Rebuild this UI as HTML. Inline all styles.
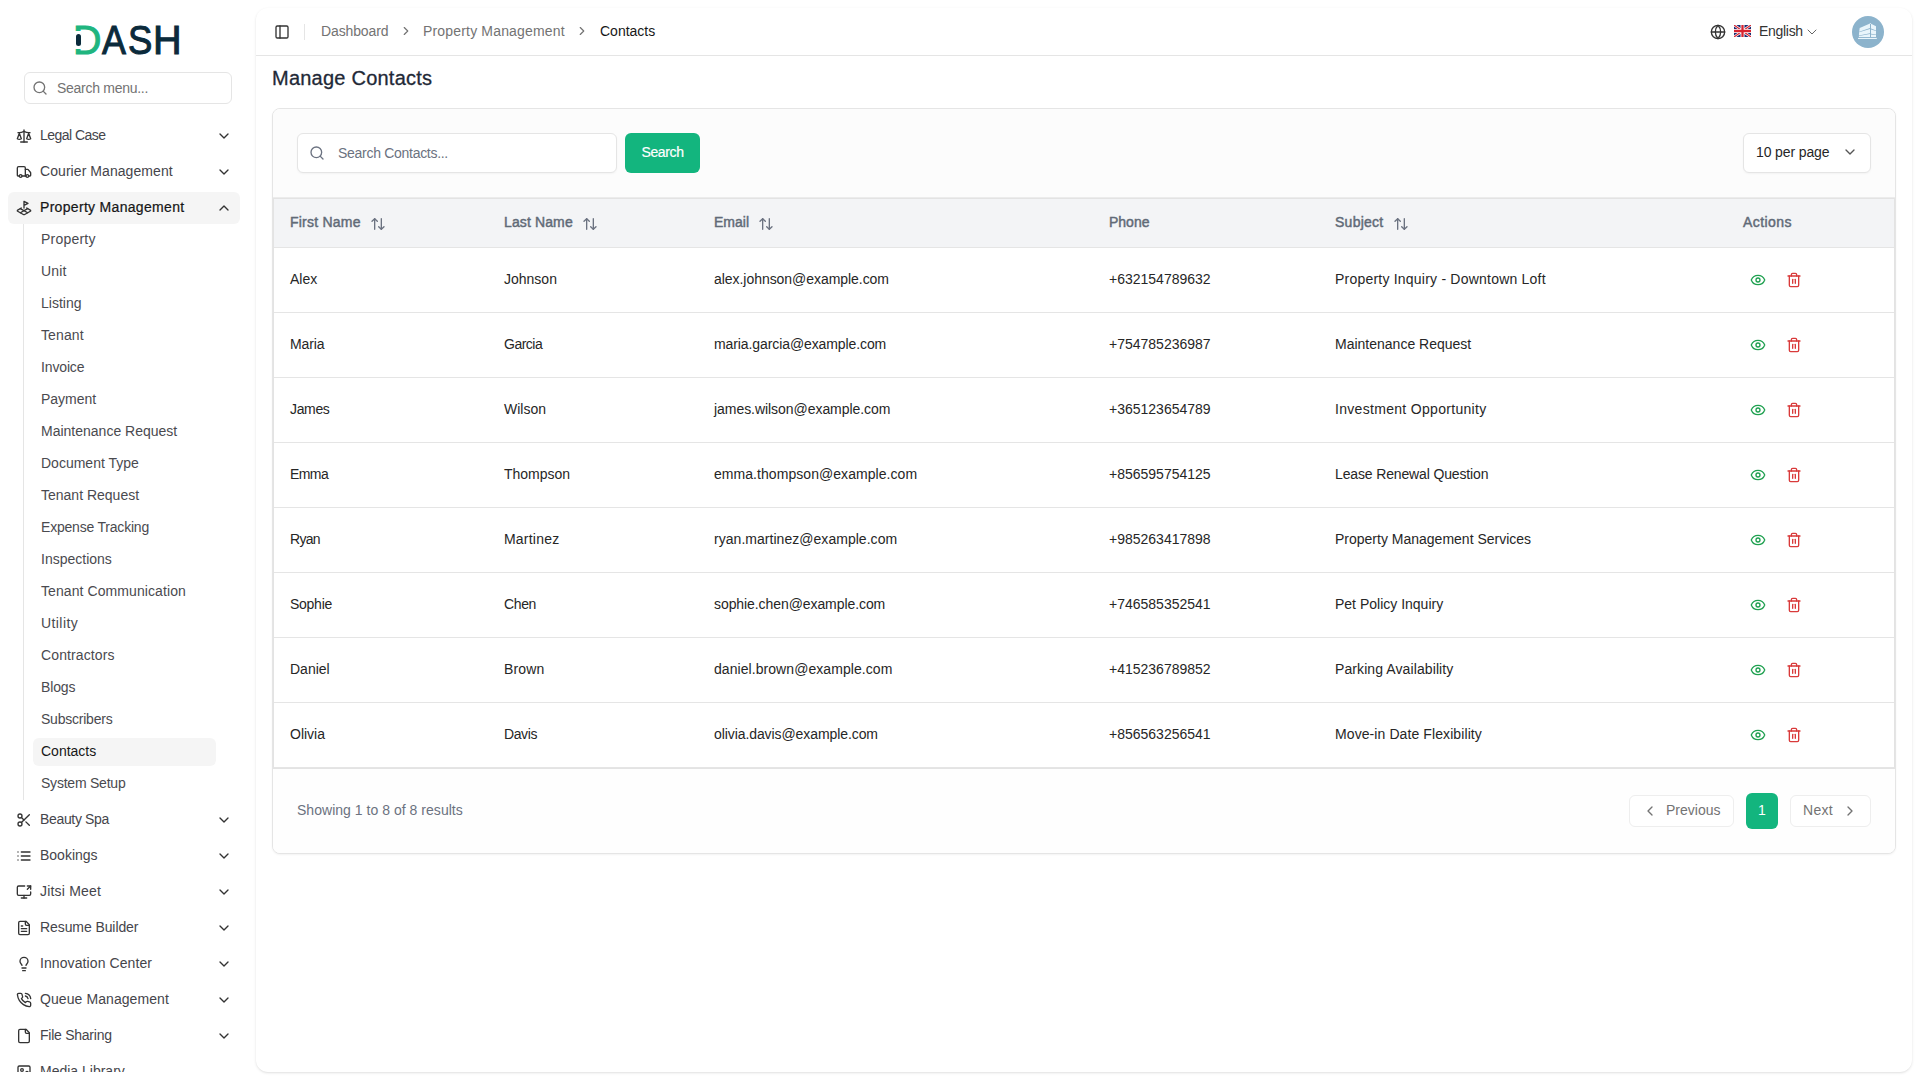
<!DOCTYPE html>
<html lang="en"><head><meta charset="utf-8"><title>Manage Contacts</title>
<style>
*{box-sizing:border-box;margin:0;padding:0}
html,body{width:1920px;height:1080px;overflow:hidden}
body{background:#fff;font-family:"Liberation Sans",sans-serif;font-size:14px;color:#262626;position:relative}
svg.i{display:block;flex:none}
i{display:block;font-style:normal}
.sidebar{position:absolute;left:0;top:0;width:256px;height:1072px;overflow:hidden}
.logo{position:absolute;left:0;top:0;width:256px;height:64px;font-weight:400;font-size:40px;line-height:40px;color:#0b2a3b;white-space:nowrap}
.logo>*{position:absolute;top:20px;transform-origin:0 50%;-webkit-text-stroke:1px #0b2a3b}
.logo .ld{left:73.350px;color:#20b57f;-webkit-text-stroke:1px #20b57f;transform:scaleX(.984)}
.logo .l2{left:102.450px;transform:scaleX(.897)}
.logo .l3{left:128.130px;transform:scaleX(.9125)}
.logo .l4{left:152.700px;transform:scaleX(.99)}
.logo .lmask{left:72px;top:31px;width:9.300px;height:18px;background:#fff}
.logo .lpill{left:76px;top:34px;width:5px;height:12px;border-radius:2.500px;background:#0b2a3b}
.msearch{position:absolute;left:24px;top:72px;width:208px;height:32px;border:1px solid #e5e5e5;border-radius:6px;background:#fff;display:flex;align-items:center;padding-left:7px;color:#737373}
.msearch>span{margin-left:9px}
.mi{position:absolute;left:8px;width:232px;height:32px;border-radius:6px;display:flex;align-items:center;padding:0 8px;color:#45454b}
.mi>svg{color:#333}
.mi .ml{margin-left:8px;white-space:nowrap;position:relative;top:-1px}
.mi .chev{margin-left:auto}
.mi.act{background:#f5f5f5;color:#171717}
.mi.act .ml{-webkit-text-stroke:0.22px #171717}
.subline{position:absolute;left:23px;top:224px;width:1px;height:576px;background:#e5e5e5}
.si{position:absolute;left:33px;width:183px;height:28px;border-radius:6px;display:flex;align-items:center;padding:0 0 2px 8px;color:#404040;white-space:nowrap}
.si.act{background:#f5f5f5;color:#171717}
.inset{position:absolute;left:256px;top:8px;width:1656px;height:1064px;background:#fff;border-radius:12px;box-shadow:0 1px 3px 0 rgba(0,0,0,.1),0 1px 2px -1px rgba(0,0,0,.1)}
.hdr{position:absolute;left:0;top:0;width:100%;height:48px;border-bottom:1px solid #e5e5e5}
.hdr>*{position:absolute}
.tgl{left:18px;top:16px;color:#333}
.vsep{left:48px;top:16px;width:1px;height:16px;background:#e5e5e5}
.bc{left:0;top:0;height:47px;width:600px;color:#737373}
.bc>*{position:absolute;top:14px;line-height:18px;white-space:nowrap}
.bc .b1{left:65px}.bc .b2{left:167px}.bc .b3{left:344px;color:#171717}
.bc .bsep{top:16px}.bc .s1{left:143px}.bc .s2{left:319px}
.lang{left:1453px;top:0;height:47px;width:120px;color:#333}
.lang>*{position:absolute}
.lang .gl{left:1px;top:16px}
.lang .flag{left:25px;top:17px}
.lang .en{left:50px;top:14px;line-height:18px}
.lang .lchev{left:95px;top:16px;color:#666}
.avatar{left:1596px;top:8px}
.title{position:absolute;left:16px;top:58px;font-size:20px;line-height:24px;font-weight:400;-webkit-text-stroke:0.3px #1f2937;color:#1f2937;white-space:nowrap}
.card{position:absolute;left:16px;top:100px;width:1624px;height:746px;border:1px solid #e5e5e5;border-radius:8px;background:#fff;box-shadow:0 1px 2px rgba(0,0,0,.05)}
.card>*{position:absolute}
.sbox{left:24px;top:24px;width:320px;height:40px;background:#fff;border:1px solid #e5e5e5;border-radius:6px;display:flex;align-items:center;padding-left:11px;color:#6b7280;box-shadow:0 1px 2px rgba(0,0,0,.04)}
.sbox>span{margin-left:13px}
.sbtn{left:352px;top:24px;width:75px;height:40px;border-radius:6px;background:#13b57e;color:#fff;text-align:center;line-height:38px;font-weight:400;-webkit-text-stroke:0.2px #fff}
.pp{left:1470px;top:24px;width:128px;height:40px;background:#fff;border:1px solid #e5e5e5;border-radius:6px;display:flex;align-items:center;padding:0 12px 2px;color:#262626;box-shadow:0 1px 2px rgba(0,0,0,.04)}
.pp .ppc{margin-left:auto;color:#555}
.filt{left:0;top:0;width:1622px;height:89px;background:#fcfcfc;border-bottom:1px solid #ececec;border-radius:7px 7px 0 0}
.foot{left:0;top:660px;width:1622px;height:84px;background:#fefefe;border-radius:0 0 7px 7px}
.twrap{left:0;top:89px;width:1622px;height:571px;border:1px solid #e3e3e3}
.tbl{border-collapse:separate;border-spacing:0;table-layout:fixed;width:1620px}
.tbl th{height:49px;background:#f3f4f6;text-align:left;padding:0 0 4px 16px;font-weight:400;-webkit-text-stroke:0.45px #616a77;color:#616a77;border-bottom:1px solid #e5e5e5;white-space:nowrap}
.tbl th .thl{display:inline-block;vertical-align:middle}
.tbl th .sort{display:inline-block;vertical-align:middle;margin-left:9px;color:#6b7280;position:relative;top:2px}
.tbl td{height:65px;padding:0 0 3px 16px;border-bottom:1px solid #e5e5e5;color:#262626;white-space:nowrap}
.tbl td.acts{padding:0 0 1px 23px}
.tbl td.acts svg{display:inline-block;vertical-align:middle}
.eye{color:#1fa050}
.trash{color:#d93a3a;margin-left:20px}
.showing{left:24px;top:692px;line-height:18px;color:#6b7280;white-space:nowrap}
.pg{height:32px;border:1px solid #eeeeee;border-radius:6px;top:686px;background:#fff;display:flex;align-items:center;padding-bottom:2px;color:#737373;white-space:nowrap}
.pg.prev{left:1356px;width:105px;padding-left:12px}
.pg.prev>span{margin-left:8px}
.pg.cur{left:1473px;top:684px;width:32px;height:36px;background:#13b57e;border:none;color:#fff;justify-content:center}
.pg.next{left:1517px;width:81px;padding-left:12px}
.pg.next>span{margin-right:8px}
.pg svg{position:relative;top:1px}
.pg.next svg{left:1px}
.si{color:#4a4a4f}

</style></head>
<body>
<aside class="sidebar">
<div class="logo"><span class="ld">D</span><span class="l2">A</span><span class="l3">S</span><span class="l4">H</span><i class="lmask"></i><i class="lpill"></i></div>
<div class="msearch"><svg class="i " width="16" height="16" viewBox="0 0 24 24" fill="none" stroke="currentColor" stroke-width="2" stroke-linecap="round" stroke-linejoin="round" style="color:#737373"><circle cx="11" cy="11" r="8"/><path d="m21 21-4.300-4.300"/></svg><span><span style="letter-spacing:-0.279px">Search menu...</span></span></div>
<div class="mi" style="top:120px"><svg class="i " width="16" height="16" viewBox="0 0 24 24" fill="none" stroke="currentColor" stroke-width="2" stroke-linecap="round" stroke-linejoin="round" style=""><path d="m16 16 3-8 3 8c-.87.65-1.92 1-3 1s-2.13-.35-3-1Z"/><path d="m2 16 3-8 3 8c-.87.65-1.92 1-3 1s-2.13-.35-3-1Z"/><path d="M7 21h10"/><path d="M12 3v18"/><path d="M3 7h2c2 0 5-1 7-2 2 1 5 2 7 2h2"/></svg><span class="ml"><span style="letter-spacing:-0.53px">Legal Case</span></span><svg class="i chev" width="16" height="16" viewBox="0 0 24 24" fill="none" stroke="currentColor" stroke-width="2" stroke-linecap="round" stroke-linejoin="round" style=""><path d="m6 9 6 6 6-6"/></svg></div>
<div class="mi" style="top:156px"><svg class="i " width="16" height="16" viewBox="0 0 24 24" fill="none" stroke="currentColor" stroke-width="2" stroke-linecap="round" stroke-linejoin="round" style=""><path d="M14 18V6a2 2 0 0 0-2-2H4a2 2 0 0 0-2 2v11a1 1 0 0 0 1 1h2"/><path d="M15 18H9"/><path d="M19 18h2a1 1 0 0 0 1-1v-3.650a1 1 0 0 0-.22-.624l-3.48-4.350A1 1 0 0 0 17.520 8H14"/><circle cx="17" cy="18" r="2"/><circle cx="7" cy="18" r="2"/></svg><span class="ml"><span style="letter-spacing:0.067px">Courier Management</span></span><svg class="i chev" width="16" height="16" viewBox="0 0 24 24" fill="none" stroke="currentColor" stroke-width="2" stroke-linecap="round" stroke-linejoin="round" style=""><path d="m6 9 6 6 6-6"/></svg></div>
<div class="mi act" style="top:192px"><svg class="i " width="16" height="16" viewBox="0 0 24 24" fill="none" stroke="currentColor" stroke-width="2" stroke-linecap="round" stroke-linejoin="round" style=""><path d="m12 8 6-3-6-3v10"/><path d="m8 11.990-5.500 3.140a1 1 0 0 0 0 1.740l8.500 4.860a2 2 0 0 0 2 0l8.500-4.860a1 1 0 0 0 0-1.740L16 12"/><path d="m6.490 12.850 11.020 6.300"/><path d="M17.510 12.850 6.500 19.150"/></svg><span class="ml"><span style="letter-spacing:0.311px">Property Management</span></span><svg class="i chev" width="16" height="16" viewBox="0 0 24 24" fill="none" stroke="currentColor" stroke-width="2" stroke-linecap="round" stroke-linejoin="round" style=""><path d="m18 15-6-6-6 6"/></svg></div>
<div class="subline"></div>
<div class="si" style="top:226px"><span><span style="letter-spacing:0.225px">Property</span></span></div>
<div class="si" style="top:258px"><span><span style="letter-spacing:0.2px">Unit</span></span></div>
<div class="si" style="top:290px"><span>Listing</span></div>
<div class="si" style="top:322px"><span><span style="letter-spacing:0.117px">Tenant</span></span></div>
<div class="si" style="top:354px"><span><span style="letter-spacing:-0.143px">Invoice</span></span></div>
<div class="si" style="top:386px"><span>Payment</span></div>
<div class="si" style="top:418px"><span>Maintenance Request</span></div>
<div class="si" style="top:450px"><span>Document Type</span></div>
<div class="si" style="top:482px"><span>Tenant Request</span></div>
<div class="si" style="top:514px"><span><span style="letter-spacing:-0.206px">Expense Tracking</span></span></div>
<div class="si" style="top:546px"><span>Inspections</span></div>
<div class="si" style="top:578px"><span><span style="letter-spacing:0.085px">Tenant Communication</span></span></div>
<div class="si" style="top:610px"><span><span style="letter-spacing:0.414px">Utility</span></span></div>
<div class="si" style="top:642px"><span><span style="letter-spacing:0.118px">Contractors</span></span></div>
<div class="si" style="top:674px"><span><span style="letter-spacing:-0.16px">Blogs</span></span></div>
<div class="si" style="top:706px"><span><span style="letter-spacing:-0.227px">Subscribers</span></span></div>
<div class="si act" style="top:738px"><span>Contacts</span></div>
<div class="si" style="top:770px"><span><span style="letter-spacing:-0.225px">System Setup</span></span></div>
<div class="mi" style="top:804px"><svg class="i " width="16" height="16" viewBox="0 0 24 24" fill="none" stroke="currentColor" stroke-width="2" stroke-linecap="round" stroke-linejoin="round" style=""><circle cx="6" cy="6" r="3"/><path d="M8.120 8.120 12 12"/><path d="M20 4 8.120 15.880"/><circle cx="6" cy="18" r="3"/><path d="M14.800 14.800 20 20"/></svg><span class="ml"><span style="letter-spacing:-0.34px">Beauty Spa</span></span><svg class="i chev" width="16" height="16" viewBox="0 0 24 24" fill="none" stroke="currentColor" stroke-width="2" stroke-linecap="round" stroke-linejoin="round" style=""><path d="m6 9 6 6 6-6"/></svg></div>
<div class="mi" style="top:840px"><svg class="i " width="16" height="16" viewBox="0 0 24 24" fill="none" stroke="currentColor" stroke-width="2" stroke-linecap="round" stroke-linejoin="round" style=""><path d="M3 12h.01"/><path d="M3 18h.01"/><path d="M3 6h.01"/><path d="M8 12h13"/><path d="M8 18h13"/><path d="M8 6h13"/></svg><span class="ml">Bookings</span><svg class="i chev" width="16" height="16" viewBox="0 0 24 24" fill="none" stroke="currentColor" stroke-width="2" stroke-linecap="round" stroke-linejoin="round" style=""><path d="m6 9 6 6 6-6"/></svg></div>
<div class="mi" style="top:876px"><svg class="i " width="16" height="16" viewBox="0 0 24 24" fill="none" stroke="currentColor" stroke-width="2" stroke-linecap="round" stroke-linejoin="round" style=""><path d="M13 3H4a2 2 0 0 0-2 2v10a2 2 0 0 0 2 2h16a2 2 0 0 0 2-2v-3"/><path d="M8 21h8"/><path d="M12 17v4"/><path d="m17 8 5-5"/><path d="M17 3h5v5"/></svg><span class="ml"><span style="letter-spacing:0.19px">Jitsi Meet</span></span><svg class="i chev" width="16" height="16" viewBox="0 0 24 24" fill="none" stroke="currentColor" stroke-width="2" stroke-linecap="round" stroke-linejoin="round" style=""><path d="m6 9 6 6 6-6"/></svg></div>
<div class="mi" style="top:912px"><svg class="i " width="16" height="16" viewBox="0 0 24 24" fill="none" stroke="currentColor" stroke-width="2" stroke-linecap="round" stroke-linejoin="round" style=""><path d="M15 2H6a2 2 0 0 0-2 2v16a2 2 0 0 0 2 2h12a2 2 0 0 0 2-2V7Z"/><path d="M14 2v4a2 2 0 0 0 2 2h4"/><path d="M10 9H8"/><path d="M16 13H8"/><path d="M16 17H8"/></svg><span class="ml"><span style="letter-spacing:-0.086px">Resume Builder</span></span><svg class="i chev" width="16" height="16" viewBox="0 0 24 24" fill="none" stroke="currentColor" stroke-width="2" stroke-linecap="round" stroke-linejoin="round" style=""><path d="m6 9 6 6 6-6"/></svg></div>
<div class="mi" style="top:948px"><svg class="i " width="16" height="16" viewBox="0 0 24 24" fill="none" stroke="currentColor" stroke-width="2" stroke-linecap="round" stroke-linejoin="round" style=""><path d="M15 14c.2-1 .7-1.700 1.500-2.500 1-.9 1.500-2.200 1.500-3.500A6 6 0 0 0 6 8c0 1 .2 2.200 1.500 3.500.7.7 1.300 1.500 1.500 2.500"/><path d="M9 18h6"/><path d="M10 22h4"/></svg><span class="ml"><span style="letter-spacing:0.094px">Innovation Center</span></span><svg class="i chev" width="16" height="16" viewBox="0 0 24 24" fill="none" stroke="currentColor" stroke-width="2" stroke-linecap="round" stroke-linejoin="round" style=""><path d="m6 9 6 6 6-6"/></svg></div>
<div class="mi" style="top:984px"><svg class="i " width="16" height="16" viewBox="0 0 24 24" fill="none" stroke="currentColor" stroke-width="2" stroke-linecap="round" stroke-linejoin="round" style=""><path d="M22 16.920v3a2 2 0 0 1-2.180 2 19.790 19.790 0 0 1-8.630-3.070 19.500 19.500 0 0 1-6-6 19.790 19.790 0 0 1-3.070-8.670A2 2 0 0 1 4.110 2h3a2 2 0 0 1 2 1.720 12.840 12.840 0 0 0 .7 2.810 2 2 0 0 1-.45 2.110L8.090 9.910a16 16 0 0 0 6 6l1.270-1.270a2 2 0 0 1 2.110-.45 12.840 12.840 0 0 0 2.810.7A2 2 0 0 1 22 16.920z"/><path d="M14.050 2a9 9 0 0 1 8 7.940"/><path d="M14.050 6A5 5 0 0 1 18 10"/></svg><span class="ml"><span style="letter-spacing:0.081px">Queue Management</span></span><svg class="i chev" width="16" height="16" viewBox="0 0 24 24" fill="none" stroke="currentColor" stroke-width="2" stroke-linecap="round" stroke-linejoin="round" style=""><path d="m6 9 6 6 6-6"/></svg></div>
<div class="mi" style="top:1020px"><svg class="i " width="16" height="16" viewBox="0 0 24 24" fill="none" stroke="currentColor" stroke-width="2" stroke-linecap="round" stroke-linejoin="round" style=""><path d="M15 2H6a2 2 0 0 0-2 2v16a2 2 0 0 0 2 2h12a2 2 0 0 0 2-2V7Z"/><path d="M14 2v4a2 2 0 0 0 2 2h4"/></svg><span class="ml"><span style="letter-spacing:-0.25px">File Sharing</span></span><svg class="i chev" width="16" height="16" viewBox="0 0 24 24" fill="none" stroke="currentColor" stroke-width="2" stroke-linecap="round" stroke-linejoin="round" style=""><path d="m6 9 6 6 6-6"/></svg></div>
<div class="mi" style="top:1056px"><svg class="i " width="16" height="16" viewBox="0 0 24 24" fill="none" stroke="currentColor" stroke-width="2" stroke-linecap="round" stroke-linejoin="round" style=""><rect width="18" height="18" x="3" y="3" rx="2" ry="2"/><circle cx="9" cy="9" r="2"/><path d="m21 15-3.086-3.086a2 2 0 0 0-2.828 0L6 21"/></svg><span class="ml">Media Library</span></div>
</aside>
<main class="inset">
<header class="hdr">
<svg class="i tgl" width="16" height="16" viewBox="0 0 24 24" fill="none" stroke="currentColor" stroke-width="2" stroke-linecap="round" stroke-linejoin="round" style=""><rect width="18" height="18" x="3" y="3" rx="2"/><path d="M9 3v18"/></svg>
<i class="vsep"></i>
<nav class="bc"><span class="b1"><span style="letter-spacing:-0.122px">Dashboard</span></span><svg class="i bsep s1" width="14" height="14" viewBox="0 0 24 24" fill="none" stroke="currentColor" stroke-width="2" stroke-linecap="round" stroke-linejoin="round" style=""><path d="m9 18 6-6-6-6"/></svg><span class="b2"><span style="letter-spacing:0.174px">Property Management</span></span><svg class="i bsep s2" width="14" height="14" viewBox="0 0 24 24" fill="none" stroke="currentColor" stroke-width="2" stroke-linecap="round" stroke-linejoin="round" style=""><path d="m9 18 6-6-6-6"/></svg><span class="b3">Contacts</span></nav>
<div class="lang"><svg class="i gl" width="16" height="16" viewBox="0 0 24 24" fill="none" stroke="currentColor" stroke-width="2" stroke-linecap="round" stroke-linejoin="round" style=""><circle cx="12" cy="12" r="10"/><path d="M12 2a14.500 14.500 0 0 0 0 20 14.500 14.500 0 0 0 0-20"/><path d="M2 12h20"/></svg><svg class="flag" width="17" height="12" viewBox="0 0 60 40" preserveAspectRatio="none"><rect width="60" height="40" fill="#1c2d72"/><path d="M0 0 60 40M60 0 0 40" stroke="#fff" stroke-width="9"/><path d="M0 0 60 40M60 0 0 40" stroke="#d8232f" stroke-width="4"/><path d="M30 0v40M0 20h60" stroke="#fff" stroke-width="14"/><path d="M30 0v40M0 20h60" stroke="#d8232f" stroke-width="8"/></svg><span class="en"><span style="letter-spacing:-0.3px">English</span></span><svg class="i lchev" width="16" height="16" viewBox="0 0 24 24" fill="none" stroke="currentColor" stroke-width="1.5" stroke-linecap="round" stroke-linejoin="round" style=""><path d="m6 9 6 6 6-6"/></svg></div>
<svg class="avatar" width="32" height="32" viewBox="0 0 32 32"><circle cx="16" cy="16" r="16" fill="#8cb3cc"/><g fill="#e9f5fb"><path d="M7.700 11.900 18 7.400V12.100L7.160 15.800Z"/><path d="M7.100 16.300 18 12.950V17.300L6.900 19.500Z"/><path d="M6.900 20.100 18 18V21.100H6.900Z"/><path d="M19 7.650 24 10.300V14.400L19 12.500Z"/><path d="M19 13.400 24 15V18.400L19 17.800Z"/><path d="M19 18.400 24 19.100V21.100H19Z"/><path d="M6.060 21.900H24.800V23H6.060Z"/><path d="M18.200 6.900 19 7.200V8H18.200Z"/></g></svg>
</header>
<h1 class="title"><span style="letter-spacing:0.233px">Manage Contacts</span></h1>
<section class="card">
<div class="filt"></div><div class="foot"></div>
<div class="sbox"><svg class="i " width="16" height="16" viewBox="0 0 24 24" fill="none" stroke="currentColor" stroke-width="2" stroke-linecap="round" stroke-linejoin="round" style="color:#6b7280"><circle cx="11" cy="11" r="8"/><path d="m21 21-4.300-4.300"/></svg><span><span style="letter-spacing:-0.289px">Search Contacts...</span></span></div>
<div class="sbtn"><span style="letter-spacing:-0.367px">Search</span></div>
<div class="pp"><span><span style="letter-spacing:-0.118px">10 per page</span></span><svg class="i ppc" width="16" height="16" viewBox="0 0 24 24" fill="none" stroke="currentColor" stroke-width="2" stroke-linecap="round" stroke-linejoin="round" style=""><path d="m6 9 6 6 6-6"/></svg></div>
<div class="twrap">
<table class="tbl"><colgroup><col style="width:214px"><col style="width:210px"><col style="width:395px"><col style="width:226px"><col style="width:408px"><col></colgroup>
<thead><tr>
<th><span class="thl"><span style="letter-spacing:0.23px">First Name</span></span><svg class="i sort" width="16" height="16" viewBox="0 0 24 24" fill="none" stroke="currentColor" stroke-width="2" stroke-linecap="round" stroke-linejoin="round" style=""><path d="m21 16-4 4-4-4"/><path d="M17 20V4"/><path d="m3 8 4-4 4 4"/><path d="M7 4v16"/></svg></th>
<th><span class="thl"><span style="letter-spacing:0.122px">Last Name</span></span><svg class="i sort" width="16" height="16" viewBox="0 0 24 24" fill="none" stroke="currentColor" stroke-width="2" stroke-linecap="round" stroke-linejoin="round" style=""><path d="m21 16-4 4-4-4"/><path d="M17 20V4"/><path d="m3 8 4-4 4 4"/><path d="M7 4v16"/></svg></th>
<th><span class="thl">Email</span><svg class="i sort" width="16" height="16" viewBox="0 0 24 24" fill="none" stroke="currentColor" stroke-width="2" stroke-linecap="round" stroke-linejoin="round" style=""><path d="m21 16-4 4-4-4"/><path d="M17 20V4"/><path d="m3 8 4-4 4 4"/><path d="M7 4v16"/></svg></th>
<th><span class="thl">Phone</span></th>
<th><span class="thl"><span style="letter-spacing:0.257px">Subject</span></span><svg class="i sort" width="16" height="16" viewBox="0 0 24 24" fill="none" stroke="currentColor" stroke-width="2" stroke-linecap="round" stroke-linejoin="round" style=""><path d="m21 16-4 4-4-4"/><path d="M17 20V4"/><path d="m3 8 4-4 4 4"/><path d="M7 4v16"/></svg></th>
<th><span class="thl"><span style="letter-spacing:0.414px">Actions</span></span></th>
</tr></thead><tbody>
<tr><td>Alex</td><td>Johnson</td><td><span style="letter-spacing:-0.046px">alex.johnson@example.com</span></td><td>+632154789632</td><td><span style="letter-spacing:0.216px">Property Inquiry - Downtown Loft</span></td><td class="acts"><svg class="i eye" width="16" height="16" viewBox="0 0 24 24" fill="none" stroke="currentColor" stroke-width="2" stroke-linecap="round" stroke-linejoin="round" style=""><path d="M2.062 12.348a1 1 0 0 1 0-.696 10.750 10.750 0 0 1 19.876 0 1 1 0 0 1 0 .696 10.750 10.750 0 0 1-19.876 0"/><circle cx="12" cy="12" r="3"/></svg><svg class="i trash" width="16" height="16" viewBox="0 0 24 24" fill="none" stroke="currentColor" stroke-width="2" stroke-linecap="round" stroke-linejoin="round" style=""><path d="M3 6h18"/><path d="M19 6v14c0 1-1 2-2 2H7c-1 0-2-1-2-2V6"/><path d="M8 6V4c0-1 1-2 2-2h4c1 0 2 1 2 2v2"/><path d="M10 11v6"/><path d="M14 11v6"/></svg></td></tr>
<tr><td><span style="letter-spacing:-0.12px">Maria</span></td><td><span style="letter-spacing:-0.5px">Garcia</span></td><td><span style="letter-spacing:-0.096px">maria.garcia@example.com</span></td><td>+754785236987</td><td>Maintenance Request</td><td class="acts"><svg class="i eye" width="16" height="16" viewBox="0 0 24 24" fill="none" stroke="currentColor" stroke-width="2" stroke-linecap="round" stroke-linejoin="round" style=""><path d="M2.062 12.348a1 1 0 0 1 0-.696 10.750 10.750 0 0 1 19.876 0 1 1 0 0 1 0 .696 10.750 10.750 0 0 1-19.876 0"/><circle cx="12" cy="12" r="3"/></svg><svg class="i trash" width="16" height="16" viewBox="0 0 24 24" fill="none" stroke="currentColor" stroke-width="2" stroke-linecap="round" stroke-linejoin="round" style=""><path d="M3 6h18"/><path d="M19 6v14c0 1-1 2-2 2H7c-1 0-2-1-2-2V6"/><path d="M8 6V4c0-1 1-2 2-2h4c1 0 2 1 2 2v2"/><path d="M10 11v6"/><path d="M14 11v6"/></svg></td></tr>
<tr><td><span style="letter-spacing:-0.34px">James</span></td><td>Wilson</td><td><span style="letter-spacing:-0.05px">james.wilson@example.com</span></td><td>+365123654789</td><td><span style="letter-spacing:0.309px">Investment Opportunity</span></td><td class="acts"><svg class="i eye" width="16" height="16" viewBox="0 0 24 24" fill="none" stroke="currentColor" stroke-width="2" stroke-linecap="round" stroke-linejoin="round" style=""><path d="M2.062 12.348a1 1 0 0 1 0-.696 10.750 10.750 0 0 1 19.876 0 1 1 0 0 1 0 .696 10.750 10.750 0 0 1-19.876 0"/><circle cx="12" cy="12" r="3"/></svg><svg class="i trash" width="16" height="16" viewBox="0 0 24 24" fill="none" stroke="currentColor" stroke-width="2" stroke-linecap="round" stroke-linejoin="round" style=""><path d="M3 6h18"/><path d="M19 6v14c0 1-1 2-2 2H7c-1 0-2-1-2-2V6"/><path d="M8 6V4c0-1 1-2 2-2h4c1 0 2 1 2 2v2"/><path d="M10 11v6"/><path d="M14 11v6"/></svg></td></tr>
<tr><td><span style="letter-spacing:-0.575px">Emma</span></td><td>Thompson</td><td><span style="letter-spacing:0.056px">emma.thompson@example.com</span></td><td>+856595754125</td><td><span style="letter-spacing:-0.141px">Lease Renewal Question</span></td><td class="acts"><svg class="i eye" width="16" height="16" viewBox="0 0 24 24" fill="none" stroke="currentColor" stroke-width="2" stroke-linecap="round" stroke-linejoin="round" style=""><path d="M2.062 12.348a1 1 0 0 1 0-.696 10.750 10.750 0 0 1 19.876 0 1 1 0 0 1 0 .696 10.750 10.750 0 0 1-19.876 0"/><circle cx="12" cy="12" r="3"/></svg><svg class="i trash" width="16" height="16" viewBox="0 0 24 24" fill="none" stroke="currentColor" stroke-width="2" stroke-linecap="round" stroke-linejoin="round" style=""><path d="M3 6h18"/><path d="M19 6v14c0 1-1 2-2 2H7c-1 0-2-1-2-2V6"/><path d="M8 6V4c0-1 1-2 2-2h4c1 0 2 1 2 2v2"/><path d="M10 11v6"/><path d="M14 11v6"/></svg></td></tr>
<tr><td><span style="letter-spacing:-0.7px">Ryan</span></td><td><span style="letter-spacing:0.212px">Martinez</span></td><td><span style="letter-spacing:0.036px">ryan.martinez@example.com</span></td><td>+985263417898</td><td>Property Management Services</td><td class="acts"><svg class="i eye" width="16" height="16" viewBox="0 0 24 24" fill="none" stroke="currentColor" stroke-width="2" stroke-linecap="round" stroke-linejoin="round" style=""><path d="M2.062 12.348a1 1 0 0 1 0-.696 10.750 10.750 0 0 1 19.876 0 1 1 0 0 1 0 .696 10.750 10.750 0 0 1-19.876 0"/><circle cx="12" cy="12" r="3"/></svg><svg class="i trash" width="16" height="16" viewBox="0 0 24 24" fill="none" stroke="currentColor" stroke-width="2" stroke-linecap="round" stroke-linejoin="round" style=""><path d="M3 6h18"/><path d="M19 6v14c0 1-1 2-2 2H7c-1 0-2-1-2-2V6"/><path d="M8 6V4c0-1 1-2 2-2h4c1 0 2 1 2 2v2"/><path d="M10 11v6"/><path d="M14 11v6"/></svg></td></tr>
<tr><td><span style="letter-spacing:-0.267px">Sophie</span></td><td><span style="letter-spacing:-0.375px">Chen</span></td><td><span style="letter-spacing:-0.078px">sophie.chen@example.com</span></td><td>+746585352541</td><td>Pet Policy Inquiry</td><td class="acts"><svg class="i eye" width="16" height="16" viewBox="0 0 24 24" fill="none" stroke="currentColor" stroke-width="2" stroke-linecap="round" stroke-linejoin="round" style=""><path d="M2.062 12.348a1 1 0 0 1 0-.696 10.750 10.750 0 0 1 19.876 0 1 1 0 0 1 0 .696 10.750 10.750 0 0 1-19.876 0"/><circle cx="12" cy="12" r="3"/></svg><svg class="i trash" width="16" height="16" viewBox="0 0 24 24" fill="none" stroke="currentColor" stroke-width="2" stroke-linecap="round" stroke-linejoin="round" style=""><path d="M3 6h18"/><path d="M19 6v14c0 1-1 2-2 2H7c-1 0-2-1-2-2V6"/><path d="M8 6V4c0-1 1-2 2-2h4c1 0 2 1 2 2v2"/><path d="M10 11v6"/><path d="M14 11v6"/></svg></td></tr>
<tr><td>Daniel</td><td><span style="letter-spacing:0.18px">Brown</span></td><td><span style="letter-spacing:0.063px">daniel.brown@example.com</span></td><td>+415236789852</td><td><span style="letter-spacing:0.095px">Parking Availability</span></td><td class="acts"><svg class="i eye" width="16" height="16" viewBox="0 0 24 24" fill="none" stroke="currentColor" stroke-width="2" stroke-linecap="round" stroke-linejoin="round" style=""><path d="M2.062 12.348a1 1 0 0 1 0-.696 10.750 10.750 0 0 1 19.876 0 1 1 0 0 1 0 .696 10.750 10.750 0 0 1-19.876 0"/><circle cx="12" cy="12" r="3"/></svg><svg class="i trash" width="16" height="16" viewBox="0 0 24 24" fill="none" stroke="currentColor" stroke-width="2" stroke-linecap="round" stroke-linejoin="round" style=""><path d="M3 6h18"/><path d="M19 6v14c0 1-1 2-2 2H7c-1 0-2-1-2-2V6"/><path d="M8 6V4c0-1 1-2 2-2h4c1 0 2 1 2 2v2"/><path d="M10 11v6"/><path d="M14 11v6"/></svg></td></tr>
<tr><td>Olivia</td><td><span style="letter-spacing:-0.4px">Davis</span></td><td><span style="letter-spacing:-0.083px">olivia.davis@example.com</span></td><td>+856563256541</td><td><span style="letter-spacing:0.092px">Move-in Date Flexibility</span></td><td class="acts"><svg class="i eye" width="16" height="16" viewBox="0 0 24 24" fill="none" stroke="currentColor" stroke-width="2" stroke-linecap="round" stroke-linejoin="round" style=""><path d="M2.062 12.348a1 1 0 0 1 0-.696 10.750 10.750 0 0 1 19.876 0 1 1 0 0 1 0 .696 10.750 10.750 0 0 1-19.876 0"/><circle cx="12" cy="12" r="3"/></svg><svg class="i trash" width="16" height="16" viewBox="0 0 24 24" fill="none" stroke="currentColor" stroke-width="2" stroke-linecap="round" stroke-linejoin="round" style=""><path d="M3 6h18"/><path d="M19 6v14c0 1-1 2-2 2H7c-1 0-2-1-2-2V6"/><path d="M8 6V4c0-1 1-2 2-2h4c1 0 2 1 2 2v2"/><path d="M10 11v6"/><path d="M14 11v6"/></svg></td></tr>
</tbody></table>
</div>
<div class="showing"><span style="letter-spacing:0.03px">Showing 1 to 8 of 8 results</span></div>
<div class="pg prev"><svg class="i " width="16" height="16" viewBox="0 0 24 24" fill="none" stroke="currentColor" stroke-width="2" stroke-linecap="round" stroke-linejoin="round" style=""><path d="m15 18-6-6 6-6"/></svg><span>Previous</span></div>
<div class="pg cur">1</div>
<div class="pg next"><span><span style="letter-spacing:0.325px">Next</span></span><svg class="i " width="16" height="16" viewBox="0 0 24 24" fill="none" stroke="currentColor" stroke-width="2" stroke-linecap="round" stroke-linejoin="round" style=""><path d="m9 18 6-6-6-6"/></svg></div>
</section>
</main>
</body></html>
